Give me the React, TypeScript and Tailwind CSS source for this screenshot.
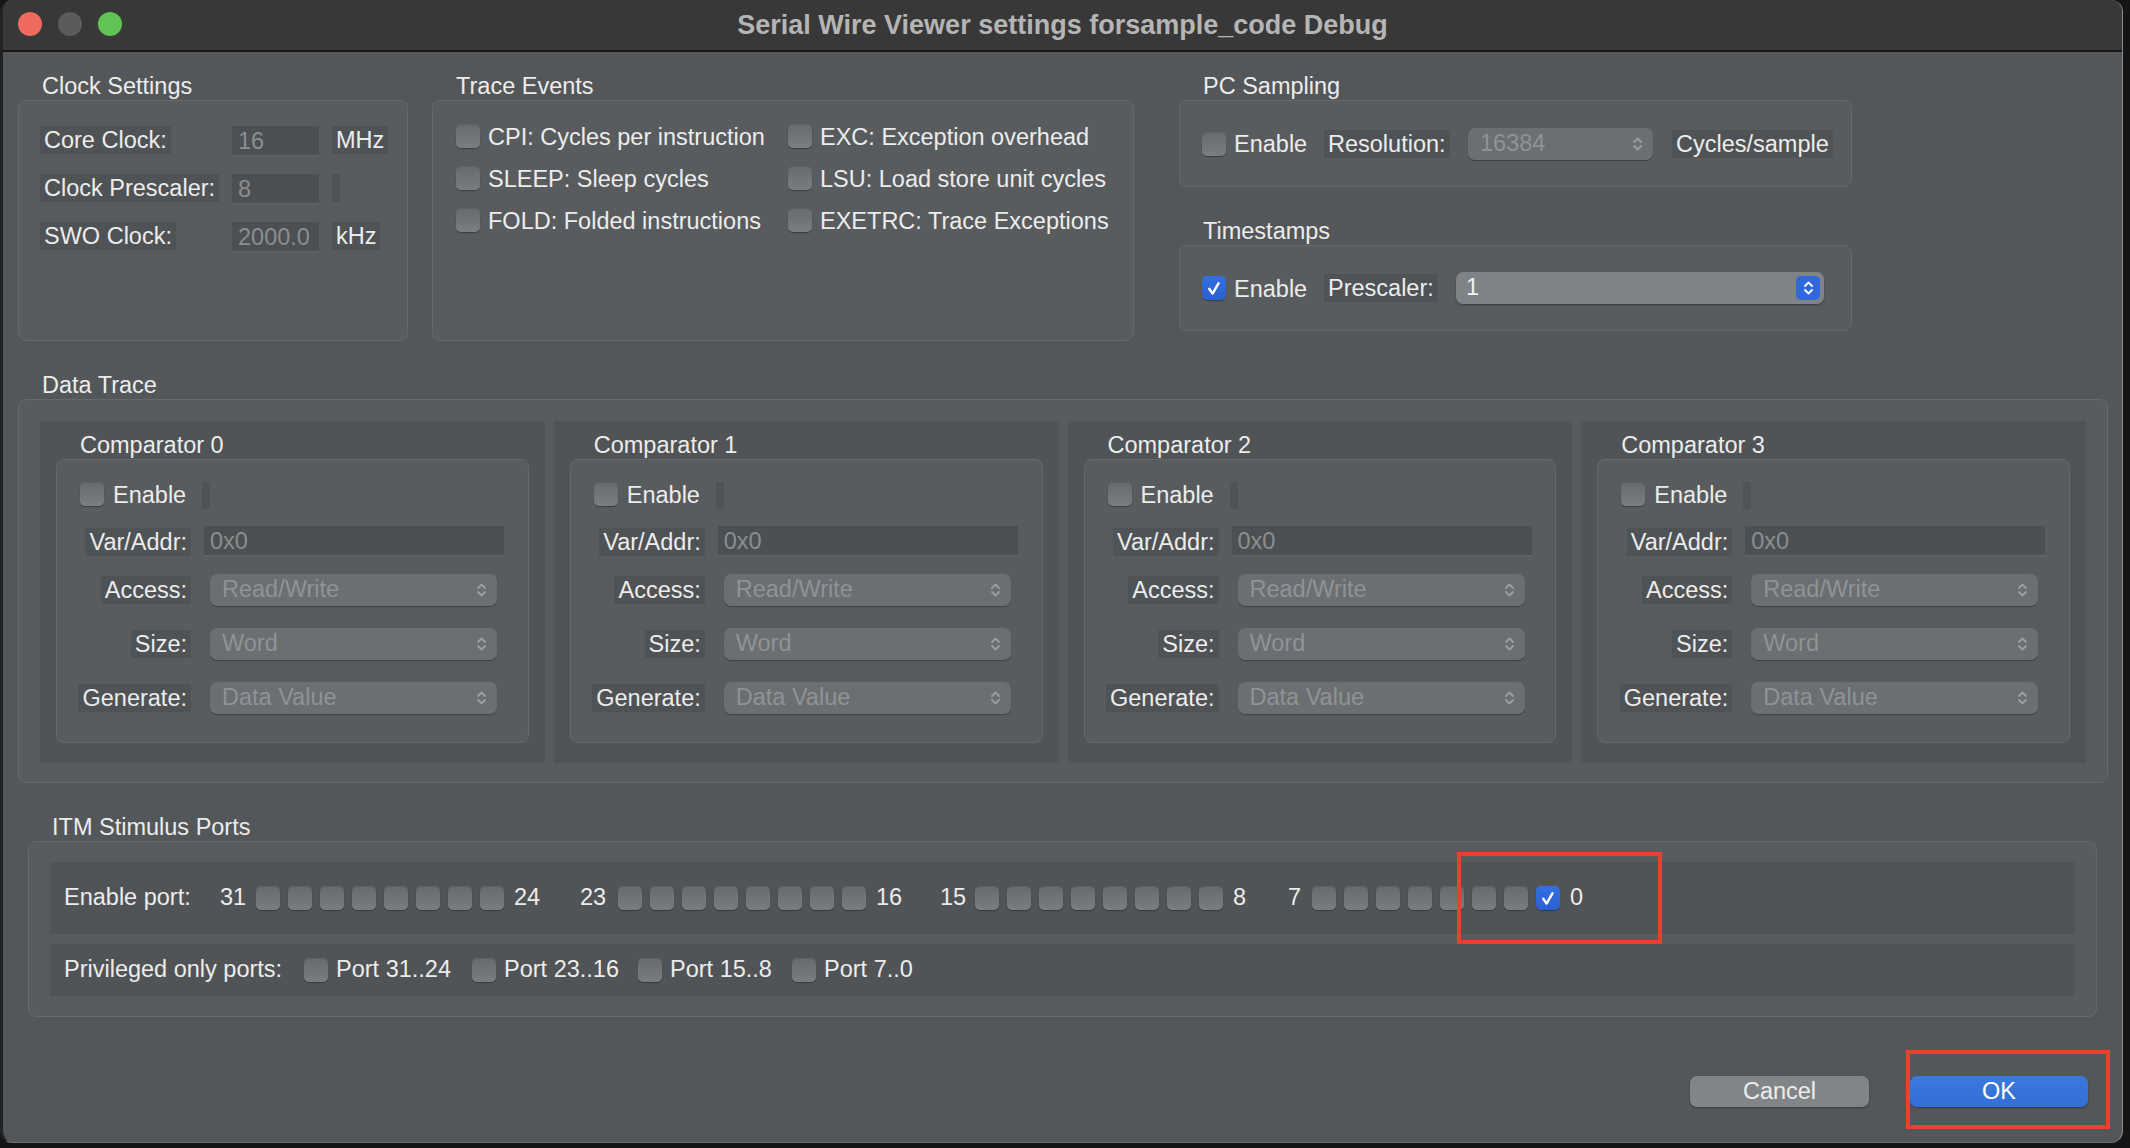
import React from "react";

const FONT = "font-['Liberation_Sans',Arial,sans-serif]";

function Check({ checked = false }: { checked?: boolean }) {
  if (checked) {
    return (
      <div className="w-[24px] h-[24px] shrink-0 rounded-[5px] bg-gradient-to-b from-[#3470e0] to-[#2a5fd0] flex items-center justify-center shadow-[0_1px_1px_rgba(0,0,0,0.35)]">
        <svg width="16" height="17" viewBox="0 0 16 17">
          <path d="M3.2 8.8 L6.6 13.6 L12.6 3.2" stroke="white" strokeWidth="2.4" fill="none" strokeLinecap="round" strokeLinejoin="round" />
        </svg>
      </div>
    );
  }
  return (
    <div className="w-[24px] h-[24px] shrink-0 rounded-[5px] bg-gradient-to-b from-[#676b6d] to-[#7a7e80] border-t border-[#5e6264] shadow-[0_1px_1px_rgba(0,0,0,0.35)]" />
  );
}

function Chevrons({ color }: { color: string }) {
  return (
    <svg width="11" height="16" viewBox="0 0 11 16" className="shrink-0">
      <path d="M2 6 L5.5 2.5 L9 6" stroke={color} strokeWidth="1.8" fill="none" strokeLinecap="round" strokeLinejoin="round" />
      <path d="M2 10 L5.5 13.5 L9 10" stroke={color} strokeWidth="1.8" fill="none" strokeLinecap="round" strokeLinejoin="round" />
    </svg>
  );
}

function DisabledSelect({ value, className }: { value: string; className: string }) {
  return (
    <div className={"h-[32px] flex items-center justify-between rounded-[7px] bg-[#6b6f71] shadow-[0_1px_1px_rgba(0,0,0,0.3)] pl-[12px] pr-[10px] " + className}>
      <span className="text-[#8f9395]">{value}</span>
      <Chevrons color="#9b9fa1" />
    </div>
  );
}

function Lbl({ children, className = "" }: { children?: React.ReactNode; className?: string }) {
  return <div className={"h-[28px] leading-[28px] bg-[#4f5355] px-[4px] whitespace-nowrap " + className}>{children}</div>;
}

function Input({ value, className }: { value: string; className: string }) {
  return (
    <div className={"h-[31px] leading-[31px] bg-[#4c5052] border-b-2 border-[#5f6365] pl-[6px] text-[#8a8e90] " + className}>{value}</div>
  );
}

function Group({
  title,
  className = "",
  boxClass = "",
  children,
}: {
  title: string;
  className?: string;
  boxClass?: string;
  children?: React.ReactNode;
}) {
  return (
    <div className={className}>
      <div className="h-[28px] leading-[28px] pl-[24px] text-[#ececec]">{title}</div>
      <div className={"rounded-[8px] border border-[#65696b] bg-[#585c5e] " + boxClass}>{children}</div>
    </div>
  );
}

function Comparator({ n }: { n: number }) {
  return (
    <div className="flex-1 bg-[#505456] px-[16px] pt-[10px] pb-[19px]">
      <Group title={"Comparator " + n} boxClass="h-[284px] pl-[23px] pt-[22px]">
        <div className="flex items-start h-[27px]">
          <div className="w-[122px] flex items-center h-[24px]">
            <Check />
            <span className="ml-[9px] pt-[4px]">Enable</span>
          </div>
          <div className="w-[8px] h-[27px] bg-[#4f5355]" />
        </div>
        <div className="flex items-center mt-[17px] h-[31px]">
          <div className="w-[111px] flex justify-end"><Lbl>Var/Addr:</Lbl></div>
          <Input value="0x0" className="ml-[13px] w-[300px]" />
        </div>
        <div className="flex items-center mt-[17px]">
          <div className="w-[111px] flex justify-end"><Lbl>Access:</Lbl></div>
          <DisabledSelect value="Read/Write" className="ml-[19px] w-[287px]" />
        </div>
        <div className="flex items-center mt-[22px]">
          <div className="w-[111px] flex justify-end"><Lbl>Size:</Lbl></div>
          <DisabledSelect value="Word" className="ml-[19px] w-[287px]" />
        </div>
        <div className="flex items-center mt-[22px]">
          <div className="w-[111px] flex justify-end"><Lbl>Generate:</Lbl></div>
          <DisabledSelect value="Data Value" className="ml-[19px] w-[287px]" />
        </div>
      </Group>
    </div>
  );
}

function Eight({ last = false }: { last?: boolean }) {
  return (
    <div className="flex gap-[8px]">
      {[0, 1, 2, 3, 4, 5, 6, 7].map((i) => (
        <Check key={i} checked={last && i === 7} />
      ))}
    </div>
  );
}

export default function App() {
  return (
    <div className={"w-[2130px] h-[1148px] bg-[#151515] text-[23.5px] text-[#ececec] overflow-hidden " + FONT}>
      <div className="relative w-[2123px] h-[1143px] rounded-[12px] overflow-hidden bg-[#535759] border-l-[3px] border-l-[#232323] border-r border-r-[#8a8e90] border-b border-b-[#6a6e70]">
        {/* Title bar */}
        <div className="relative h-[52px] bg-[#383838] border-b-2 border-[#191919] flex items-center justify-center">
          <div className="absolute left-[15px] top-[12px] flex gap-[16px]">
            <div className="w-[24px] h-[24px] rounded-full bg-[#ee6a5e]" />
            <div className="w-[24px] h-[24px] rounded-full bg-[#5b5b5b]" />
            <div className="w-[24px] h-[24px] rounded-full bg-[#5fc454]" />
          </div>
          <div className="font-bold text-[27px] text-[#b5b5b5]">Serial Wire Viewer settings forsample_code Debug</div>
        </div>

        <div className="pl-[15px] pt-[20px]">
          {/* Top row */}
          <div className="flex items-start">
            <Group title="Clock Settings" className="w-[390px]" boxClass="h-[241px] pl-[21px] pt-[25px]">
              {[
                ["Core Clock:", "16", "MHz"],
                ["Clock Prescaler:", "8", ""],
                ["SWO Clock:", "2000.0", "kHz"],
              ].map(([l, v, u], i) => (
                <div key={i} className={"flex items-start h-[31px] " + (i > 0 ? "mt-[17px]" : "")}>
                  <div className="w-[179px] flex items-start"><Lbl>{l}</Lbl></div>
                  <Input value={v} className="ml-[13px] w-[87px]" />
                  <Lbl className={"ml-[13px] " + (u ? "" : "w-[8px]")}>{u}</Lbl>
                </div>
              ))}
            </Group>

            <Group title="Trace Events" className="ml-[24px] w-[702px]" boxClass="h-[241px] pl-[23px] pt-[23px]">
              <div className="grid grid-cols-[332px_1fr] gap-y-[18px]">
                {[
                  "CPI: Cycles per instruction",
                  "EXC: Exception overhead",
                  "SLEEP: Sleep cycles",
                  "LSU: Load store unit cycles",
                  "FOLD: Folded instructions",
                  "EXETRC: Trace Exceptions",
                ].map((t) => (
                  <div key={t} className="flex items-center h-[24px]">
                    <Check />
                    <span className="ml-[8px] pt-[4px] whitespace-nowrap">{t}</span>
                  </div>
                ))}
              </div>
            </Group>

            <div className="ml-[45px] w-[673px]">
              <Group title="PC Sampling" boxClass="h-[87px] pl-[22px] flex items-center">
                <div className="w-[122px] flex items-center">
                  <Check />
                  <span className="ml-[8px] pt-[3px]">Enable</span>
                </div>
                <Lbl className="w-[126px]">Resolution:</Lbl>
                <DisabledSelect value="16384" className="ml-[18px] w-[185px]" />
                <Lbl className="ml-[19px]">Cycles/sample</Lbl>
              </Group>
              <Group title="Timestamps" className="mt-[30px]" boxClass="h-[86px] pl-[22px] flex items-center">
                <div className="w-[122px] flex items-center">
                  <Check checked />
                  <span className="ml-[8px] pt-[3px]">Enable</span>
                </div>
                <Lbl className="w-[114px]">Prescaler:</Lbl>
                <div className="ml-[18px] w-[368px] h-[32px] flex items-center justify-between rounded-[7px] bg-[#7f8385] shadow-[0_1px_2px_rgba(0,0,0,0.35)] pl-[10px] pr-[4px]">
                  <span className="text-[#f2f2f2]">1</span>
                  <div className="w-[24px] h-[24px] rounded-[5px] bg-[#2f68dc] flex items-center justify-center">
                    <Chevrons color="#ffffff" />
                  </div>
                </div>
              </Group>
            </div>
          </div>

          {/* Data Trace */}
          <Group title="Data Trace" className="mt-[30px] w-[2090px]" boxClass="h-[384px] px-[21px] pt-[21px] pb-[19px] flex gap-[9px]">
            {[0, 1, 2, 3].map((n) => (
              <Comparator key={n} n={n} />
            ))}
          </Group>

          {/* ITM */}
          <Group title="ITM Stimulus Ports" className="mt-[30px] ml-[10px] w-[2069px]" boxClass="h-[176px] px-[21px] pt-[20px]">
            <div className="h-[72px] bg-[#505456] pl-[14px] flex items-center">
              <span className="w-[156px] whitespace-nowrap">Enable port:</span>
              <span className="w-[36px]">31</span>
              <Eight />
              <span className="ml-[10px] w-[66px]">24</span>
              <span className="w-[38px]">23</span>
              <Eight />
              <span className="ml-[10px] w-[64px]">16</span>
              <span className="w-[35px]">15</span>
              <Eight />
              <span className="ml-[10px] w-[55px]">8</span>
              <span className="w-[24px]">7</span>
              <Eight last />
              <span className="ml-[10px]">0</span>
            </div>
            <div className="mt-[10px] h-[52px] bg-[#505456] pl-[14px] flex items-center">
              <span className="w-[240px] whitespace-nowrap">Privileged only ports:</span>
              <Check />
              <span className="ml-[8px] w-[136px]">Port 31..24</span>
              <Check />
              <span className="ml-[8px] w-[134px]">Port 23..16</span>
              <Check />
              <span className="ml-[8px] w-[122px]">Port 15..8</span>
              <Check />
              <span className="ml-[8px]">Port 7..0</span>
            </div>
          </Group>

          {/* Buttons */}
          <div className="mt-[59px] flex justify-end pr-[34px]">
            <div className="w-[179px] h-[31px] rounded-[7px] bg-[#818587] shadow-[0_1px_2px_rgba(0,0,0,0.35)] flex items-center justify-center text-[#ededed]">Cancel</div>
            <div className="ml-[41px] w-[178px] h-[31px] rounded-[7px] bg-gradient-to-b from-[#3b79de] to-[#336fd6] shadow-[0_1px_2px_rgba(0,0,0,0.35)] flex items-center justify-center text-white">OK</div>
          </div>
        </div>

        {/* Red annotation boxes */}
        <div className="absolute left-[1454px] top-[852px] w-[205px] h-[92px] border-[4px] border-[#e9412b]" />
        <div className="absolute left-[1903px] top-[1050px] w-[204px] h-[79px] border-[4px] border-[#e9412b]" />
      </div>
    </div>
  );
}
